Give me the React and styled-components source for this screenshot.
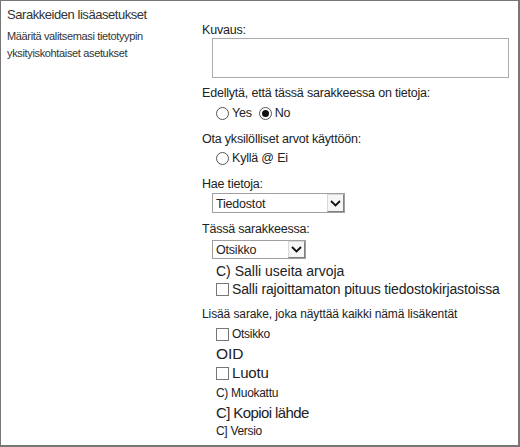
import styled, { createGlobalStyle } from "styled-components";

const GlobalStyle = createGlobalStyle`
  html, body {
    margin: 0;
    padding: 0;
    background: #fff;
  }
  body {
    font-family: "Liberation Sans", Arial, sans-serif;
    color: #222;
  }
`;

const Frame = styled.div`
  box-sizing: border-box;
  width: 520px;
  height: 447px;
  border: 1px solid #777;
  border-right-width: 2px;
  border-bottom-width: 2px;
  display: grid;
  grid-template-columns: 201px 1fr;
  overflow: hidden;
`;

const Side = styled.div`
  padding: 6px 0 0 6px;
`;

const SideTitle = styled.div`
  font-size: 13px;
  line-height: 16px;
  color: #333;
  letter-spacing: -0.45px;
`;

const SideText = styled.div`
  margin-top: 5px;
  font-size: 11px;
  line-height: 17px;
  color: #333;
  letter-spacing: -0.35px;
`;

const Main = styled.div`
  padding-top: 20px;
  display: flex;
  flex-direction: column;
  align-items: flex-start;
`;

const Label = styled.div`
  margin-top: ${({ $mt }) => $mt || 0}px;
  font-size: ${({ $size }) => $size || 12.5}px;
  line-height: 16px;
  height: 16px;
  white-space: nowrap;
  letter-spacing: ${({ $ls }) => ($ls === undefined ? -0.2 : $ls)}px;
  color: #222;
`;

const Indented = styled(Label)`
  margin-left: 14px;
  display: flex;
  align-items: center;
  gap: 2px;
`;

const TextBox = styled.div`
  box-sizing: border-box;
  margin-left: 10px;
  width: 297px;
  height: 40px;
  border: 1px solid #ababab;
`;

const Radio = styled.span`
  box-sizing: border-box;
  width: 13px;
  height: 13px;
  border-radius: 50%;
  border: 1px solid #555;
  display: inline-flex;
  align-items: center;
  justify-content: center;
  margin-right: 1px;

  &::after {
    content: "";
    width: 7px;
    height: 7px;
    border-radius: 50%;
    background: ${({ $on }) => ($on ? "#111" : "transparent")};
  }
`;

const Check = styled.span`
  box-sizing: border-box;
  width: 13px;
  height: 13px;
  border: 1px solid #777;
  display: inline-block;
  margin-right: 1px;
`;

const Gap = styled.span`
  width: ${({ $w }) => $w}px;
`;

const Select = styled.div`
  box-sizing: border-box;
  margin-top: ${({ $mt }) => $mt || 0}px;
  margin-left: 10px;
  width: ${({ $w }) => $w}px;
  height: ${({ $h }) => $h}px;
  border: 1px solid #a0a0a0;
  display: flex;
  align-items: stretch;
  font-size: 12.5px;
  letter-spacing: -0.2px;
`;

const SelectText = styled.span`
  flex: 1;
  padding-left: 3px;
  display: flex;
  align-items: center;
  padding-top: 1px;
`;

const SelectButton = styled.span`
  box-sizing: border-box;
  width: 17px;
  border: 1px solid #d8d8d8;
  border-right-color: #808080;
  border-bottom-color: #808080;
  display: flex;
  align-items: center;
  justify-content: center;
  background: #f6f6f6;
`;

const Chevron = () => (
  <svg width="11" height="7" viewBox="0 0 11 7">
    <path d="M1 1 L5.5 5.5 L10 1" fill="none" stroke="#111" strokeWidth="1.8" />
  </svg>
);

export default function App() {
  return (
    <>
      <GlobalStyle />
      <Frame>
        <Side>
          <SideTitle>Sarakkeiden lisäasetukset</SideTitle>
          <SideText>
            Määritä valitsemasi tietotyypin
            <br />
            yksityiskohtaiset asetukset
          </SideText>
        </Side>
        <Main>
          <Label $mt={1}>Kuvaus:</Label>
          <TextBox />
          <Label $mt={7}>Edellytä, että tässä sarakkeessa on tietoja:</Label>
          <Indented $mt={4}>
            <Radio />
            Yes
            <Gap $w={3} />
            <Radio $on />
            No
          </Indented>
          <Label $mt={10}>Ota yksilölliset arvot käyttöön:</Label>
          <Indented $mt={3}>
            <Radio />
            Kyllä @ Ei
          </Indented>
          <Label $mt={10}>Hae tietoja:</Label>
          <Select $mt={1} $w={133} $h={20}>
            <SelectText>Tiedostot</SelectText>
            <SelectButton>
              <Chevron />
            </SelectButton>
          </Select>
          <Label $mt={8}>Tässä sarakkeessa:</Label>
          <Select $mt={3} $w={94} $h={19}>
            <SelectText>Otsikko</SelectText>
            <SelectButton>
              <Chevron />
            </SelectButton>
          </Select>
          <Indented $mt={4} $size={14} $ls={0}>
            C) Salli useita arvoja
          </Indented>
          <Indented $mt={2} $size={14} $ls={-0.15}>
            <Check />
            Salli rajoittamaton pituus tiedostokirjastoissa
          </Indented>
          <Label $mt={9} $size={12} $ls={-0.1}>
            Lisää sarake, joka näyttää kaikki nämä lisäkentät
          </Label>
          <Indented $mt={4} $size={12} $ls={-0.3}>
            <Check />
            Otsikko
          </Indented>
          <Indented $mt={4} $size={15.5} $ls={0}>
            OID
          </Indented>
          <Indented $mt={3} $size={15} $ls={-0.2}>
            <Check />
            Luotu
          </Indented>
          <Indented $mt={4} $size={12} $ls={-0.3}>
            C) Muokattu
          </Indented>
          <Indented $mt={4} $size={15} $ls={-0.6}>
            C] Kopioi lähde
          </Indented>
          <Indented $mt={2} $size={12} $ls={-0.3}>
            C] Versio
          </Indented>
        </Main>
      </Frame>
    </>
  );
}
